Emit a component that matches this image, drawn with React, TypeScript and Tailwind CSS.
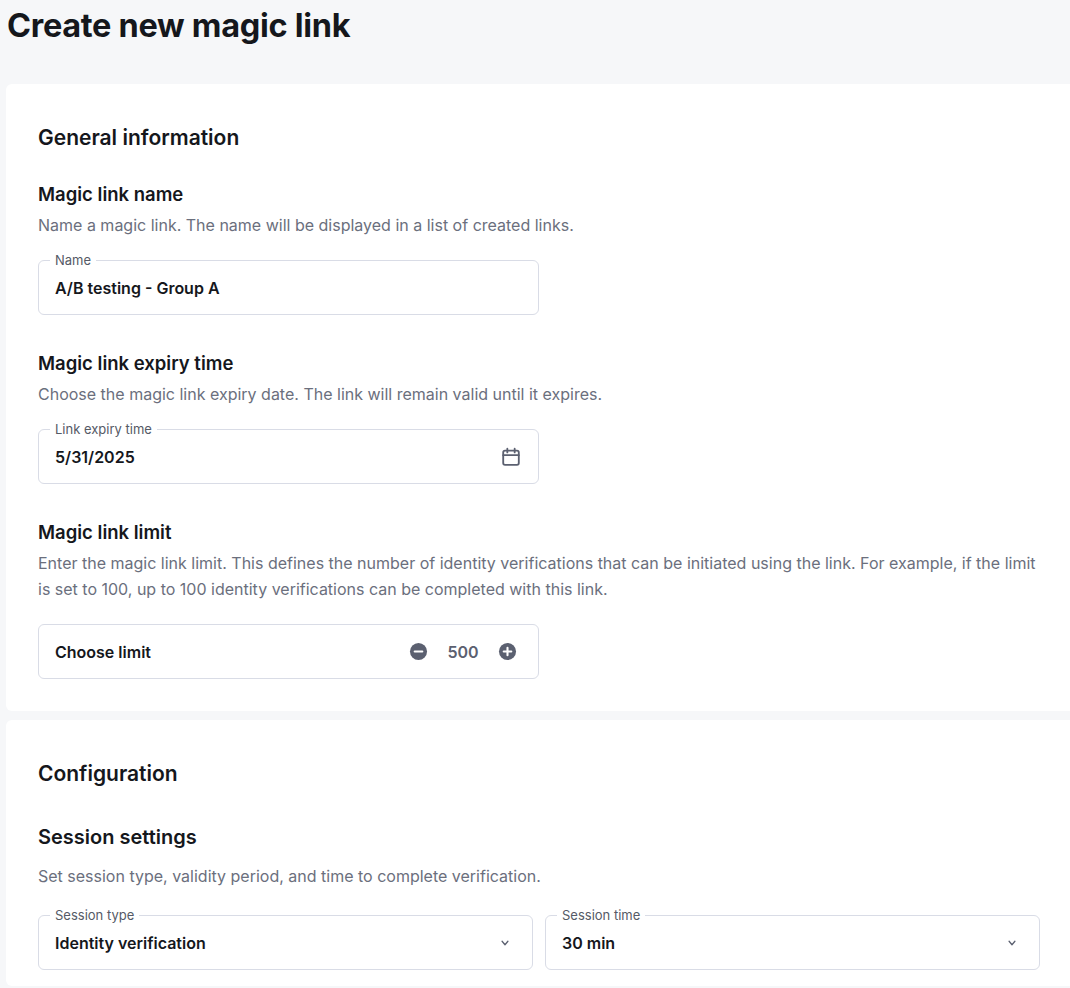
import React from 'react';

function Field({ label, value, children, className = '' }: { label: string; value: string; children?: React.ReactNode; className?: string }) {
  return (
    <div className={`relative h-[55px] rounded-md border border-[#d9dce6] bg-white flex items-center px-4 ${className}`}>
      <span className="absolute -top-[9px] left-[11px] bg-white px-[5px] text-[13px] leading-4 text-[#555a66]">{label}</span>
      <span className="flex-1 text-[16px] font-semibold text-[#15171c]">{value}</span>
      {children}
    </div>
  );
}

function Chevron() {
  return (
    <svg width="14" height="14" viewBox="0 0 24 24" fill="none" stroke="#5b6070" strokeWidth="2.2" strokeLinecap="round" strokeLinejoin="round" className="mr-1">
      <path d="M7 9l5 6 5-6" />
    </svg>
  );
}

function Section({ title, desc, children }: { title: string; desc: React.ReactNode; children: React.ReactNode }) {
  return (
    <div>
      <h3 className="text-[18.5px] font-semibold leading-6 text-[#15171c]">{title}</h3>
      <p className="mt-[6px] text-[16px] leading-[26px] text-[#6b6f7d]">{desc}</p>
      <div className="mt-[22px]">{children}</div>
    </div>
  );
}

export default function App() {
  return (
    <div className="min-h-screen bg-[#f6f7f9] pl-[6px] pb-4" style={{ fontFamily: 'Inter, "Liberation Sans", sans-serif' }}>
      <h1 className="pt-[6px] pl-[1px] text-[32.5px] font-bold leading-[40px] tracking-[-0.3px] text-[#15171c]">Create new magic link</h1>

      <div className="mt-[38px] rounded-l-md bg-white pl-[32px] pr-[30px] pt-[40px] pb-[32px]">
        <h2 className="text-[21px] font-semibold leading-7 text-[#15171c]">General information</h2>
        <div className="mt-[30px] flex flex-col gap-[36px]">
          <Section title="Magic link name" desc="Name a magic link. The name will be displayed in a list of created links.">
            <Field label="Name" value="A/B testing - Group A" className="w-[501px]" />
          </Section>
          <Section title="Magic link expiry time" desc="Choose the magic link expiry date. The link will remain valid until it expires.">
            <Field label="Link expiry time" value="5/31/2025" className="w-[501px]">
              <svg width="22" height="22" viewBox="0 0 24 24" fill="none" stroke="#5b6070" strokeWidth="2" strokeLinecap="round">
                <rect x="3.5" y="5" width="17" height="15.5" rx="2" />
                <path d="M3.5 10h17M8 3v4M16 3v4" />
              </svg>
            </Field>
          </Section>
          <Section
            title="Magic link limit"
            desc="Enter the magic link limit. This defines the number of identity verifications that can be initiated using the link. For example, if the limit is set to 100, up to 100 identity verifications can be completed with this link."
          >
            <div className="mt-[7px] h-[55px] w-[501px] rounded-md border border-[#d9dce6] bg-white flex items-center px-4">
              <span className="flex-1 text-[16px] font-semibold text-[#15171c]">Choose limit</span>
              <svg width="19" height="19" viewBox="0 0 20 20"><circle cx="10" cy="10" r="9" fill="#5b6070" /><path d="M6 10h8" stroke="#fff" strokeWidth="2.2" strokeLinecap="round" /></svg>
              <span className="w-[70px] text-center text-[16px] font-semibold text-[#5b6070]">500</span>
              <svg width="19" height="19" viewBox="0 0 20 20" className="mr-[5px]"><circle cx="10" cy="10" r="9" fill="#5b6070" /><path d="M6 10h8M10 6v8" stroke="#fff" strokeWidth="2.2" strokeLinecap="round" /></svg>
            </div>
          </Section>
        </div>
      </div>

      <div className="mt-[9px] rounded-l-md bg-white pl-[32px] pr-[30px] pt-[40px] pb-[16px]">
        <h2 className="text-[21px] font-semibold leading-7 text-[#15171c]">Configuration</h2>
        <h3 className="mt-[35px] text-[20px] font-semibold leading-7 text-[#15171c]">Session settings</h3>
        <p className="mt-[12px] text-[16px] leading-[26px] text-[#6b6f7d]">Set session type, validity period, and time to complete verification.</p>
        <div className="mt-[26px] grid grid-cols-2 gap-[12px]">
          <Field label="Session type" value="Identity verification"><Chevron /></Field>
          <Field label="Session time" value="30 min"><Chevron /></Field>
        </div>
      </div>
    </div>
  );
}
